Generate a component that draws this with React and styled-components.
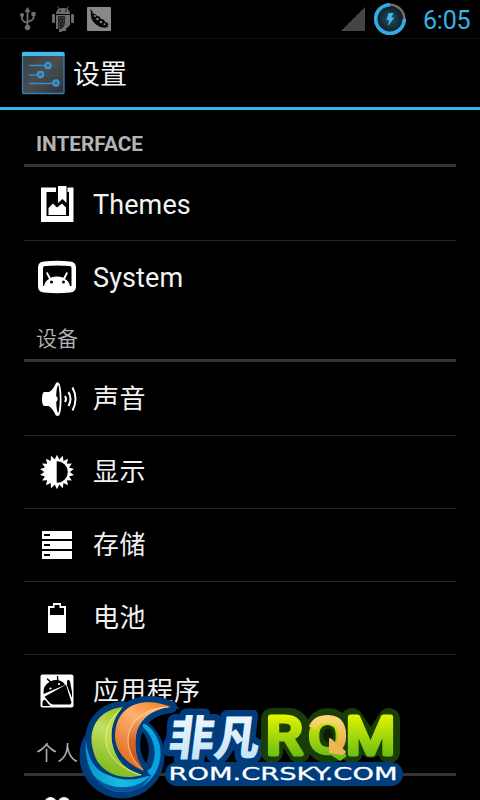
import React from "react";
import styled, { createGlobalStyle } from "styled-components";

const GlobalStyle = createGlobalStyle`
  html, body { margin: 0; background: #000; overflow: hidden; }
  * { box-sizing: border-box; }
`;

const Screen = styled.div`
  position: relative;
  width: 480px;
  height: 800px;
  overflow: hidden;
  background: #000;
  color: #f2f2f2;
  font-family: Roboto, "Noto Sans CJK SC", sans-serif;
`;

const StatusBar = styled.header`
  display: flex;
  align-items: center;
  justify-content: space-between;
  height: 39px;
  padding: 0 10px 0 19px;
  border-bottom: 1px solid #0c0e0f;
`;

const StatusGroup = styled.div`
  display: flex;
  align-items: center;
  height: 38px;
`;

const UsbGap = styled.span`
  display: flex;
  margin-right: 14px;
`;

const DroidGap = styled.span`
  display: flex;
  margin-right: 12px;
`;

const Signal = styled.svg`
  margin: 0 8px 1px 0;
`;

const Clock = styled.time`
  width: 47px;
  margin-left: 16px;
  padding-top: 3px;
  font-size: 25px;
  line-height: 36px;
  letter-spacing: -0.2px;
  white-space: nowrap;
  color: #33b5e5;
`;

const TitleBar = styled.div`
  display: flex;
  align-items: center;
  height: 71px;
  padding: 0 0 0 21px;
  border-bottom: 3px solid #33b5e5;
`;

const Title = styled.h1`
  margin: 0 0 0 8px;
  padding-top: 4px;
  font-size: 27px;
  font-weight: 400;
  line-height: 36px;
`;

const Content = styled.main`
  padding: 8px 24px 0;
`;

const SectionTitle = styled.h2`
  height: 49px;
  margin: 0 0 1px;
  padding: 4px 12px 0;
  border-bottom: 3px solid #343434;
  color: #b4b4b4;
  font-size: ${(p) => (p.$bold ? "20.8px" : "21px")};
  font-weight: ${(p) => (p.$bold ? 700 : 350)};
  line-height: 44px;
`;

const List = styled.ul`
  margin: 0;
  padding: 0;
  list-style: none;
`;

const Row = styled.li`
  display: flex;
  align-items: center;
  height: 73px;
  border-bottom: 1px solid #262626;
  &:last-child { height: 72px; border-bottom: 0; }
`;

const IconSlot = styled.span`
  display: flex;
  justify-content: center;
  width: 66px;
  margin-right: 3px;
  svg { display: block; }
`;

const Label = styled.span`
  font-size: ${(p) => (p.$latin ? "27px" : "26px")};
  line-height: 40px;
  letter-spacing: ${(p) => (p.$latin ? "0.1px" : p.$wide ? "1px" : "0.5px")};
  padding-top: ${(p) => (p.$latin ? "1px" : "0")};
`;

const Watermark = styled.svg`
  position: absolute;
  left: 70px;
  top: 690px;
`;

const Icon = ({ children }) => (
  <svg width="48" height="48" viewBox="0 0 48 48" fill="#fff">{children}</svg>
);

const UsbIcon = () => (
  <svg width="18" height="26" viewBox="0 0 18 26" fill="none" stroke="#707070" strokeWidth="1.8">
    <path d="M8.500 4v17M3 10v3q0 2 5.500 4M14.500 9v3q0 2-6 4" />
    <path d="M8.500 1l3 5h-6zM12.500 6h4v4h-4z" fill="#707070" stroke="none" />
    <circle cx="3" cy="9" r="2.100" fill="#707070" stroke="none" />
    <circle cx="8.500" cy="21.500" r="2.700" fill="#707070" stroke="none" />
  </svg>
);

const DroidIcon = () => (
  <svg width="24" height="28" viewBox="0 0 24 28" fill="#6c6c6c">
    <path d="M5 8q1-5 7-5t7 5v1H5z" />
    <path d="M8 4L6.500 1.500M16 4l1.500-2.500" stroke="#6c6c6c" strokeWidth="1" />
    <rect x="1" y="9" width="3" height="9" rx="1" />
    <rect x="20" y="9" width="3" height="9" rx="1" />
    <path d="M5 10h14v10l-4 4v2h-3l-2 1H8v-3H5z" />
    <path d="M7 11h7v6q0 5-4 7H7z" fill="#252525" />
    <path d="M8 13h5M9 16h5M8 19h4M8 22h3" stroke="#777" strokeDasharray="1 2" />
    <circle cx="9" cy="6" r=".8" fill="#000" />
    <circle cx="15" cy="6" r=".8" fill="#000" />
  </svg>
);

const PeapodIcon = () => (
  <svg width="24" height="24" viewBox="0 0 24 24">
    <rect width="24" height="24" rx="1" fill="#888" />
    <path d="M3 2.500l1 2.500Q2.500 12 9 17.500 16 23 22 19.500 17 19 13 16.500 6 12 5.500 4.500L4 2.500z" fill="#050505" />
    <path d="M5.500 6.500Q9 6 10 9q3 0 4 3 3.500 0 4 3 3 0 3.500 3l-3 1.500Q8 17 5.500 6.500z" fill="#050505" />
    <g fill="#888">
      <circle cx="8" cy="9" r="1" /><circle cx="10.500" cy="12" r="1.200" />
      <circle cx="14" cy="15" r="1.200" /><circle cx="17.500" cy="17.200" r="1" />
    </g>
  </svg>
);

const BatteryRing = () => (
  <svg width="34" height="34" viewBox="0 0 34 34" fill="none">
    <defs>
      <radialGradient id="core"><stop stopColor="#225166" /><stop offset="1" stopColor="#0c202a" /></radialGradient>
    </defs>
    <circle cx="17" cy="17" r="13" fill="url(#core)" />
    <circle cx="17" cy="17" r="14.300" stroke="#796b63" strokeWidth="2.500" />
    <path d="M17 2.700A14.300 14.300 0 1 0 31.300 17" stroke="#33ade0" strokeWidth="3.600" />
    <path d="M15.500 11h5l-2 4.500h3l-6.500 8.500 1-6h-2.500z" fill="#40b6e4" />
  </svg>
);

const SettingsIcon = () => (
  <svg width="44" height="44" viewBox="0 0 44 44">
    <defs>
      <linearGradient id="panel" x2="1" y2="1"><stop stopColor="#3b4043" /><stop offset=".5" stopColor="#4b4c4d" /><stop offset="1" stopColor="#303335" /></linearGradient>
    </defs>
    <rect x="1.500" y="1.500" width="41.500" height="41" rx="1" fill="url(#panel)" stroke="#2b83c4" strokeWidth="1.300" />
    <path d="M1 5V3q0-2 2-2h38.500q2 0 2 2v2z" fill="#45b9ea" />
    <path d="M8 14.500h17M8 24h11M8 32.500h25" stroke="#338ccf" strokeWidth="1.500" />
    <path d="M31 14.500h6M23 24h14" stroke="#285d88" strokeWidth="1.200" />
    <g fill="#555d62" stroke="#3498dd" strokeWidth="2"><circle cx="27" cy="14.500" r="2.700" /><circle cx="19.500" cy="23.500" r="2.700" /><circle cx="35" cy="32" r="2.700" /></g>
  </svg>
);

const ThemesIcon = () => (
  <Icon>
    <path d="M8 7.500h15V12h-9.500v24H36V12h-1.500V7.500h6V42H8z" />
    <path d="M25 6h8.500v17l-4-4-4.500 4z" />
    <path d="M15.500 35V28l4.500-4.500 4 4 5-4 4 4v7.500z" />
  </Icon>
);

const SystemIcon = () => (
  <Icon>
    <path fillRule="evenodd" d="M11 8.500q13-1.500 26 0 6 .5 6 6v19q0 5.500-6 6-13 1.500-26 0-6-.5-6-6v-19q0-5.500 6-6zM12 13q-2 0-2 2v18h1q1-5 5-7l-3-6 1.500-1 3.200 5.800q6.300-2.500 12.600 0L33.500 19l1.500 1-3 6q4 2 5 7h1.500V15q0-2-2-2-12-1-24.500 0z" />
    <circle cx="18.500" cy="29" r="1.500" fill="#000" />
    <circle cx="30.500" cy="29" r="1.500" fill="#000" />
  </Icon>
);

const SoundIcon = () => (
  <Icon>
    <path d="M11 17h5q4-2 7-9 5-4 5.500 16 0 21-6 16-3-7-7-9H11q-2-1-2-7t2-7z" />
    <path d="M25.500 10q-2 1-2.300 11 3 3 0 6 .3 10 2.300 11 2.500-14 0-28z" fill="#000" />
    <path d="M32 21q2 3 0 6M35.500 17q4 7 0 14M39.500 12.500q6 11.500 0 23" fill="none" stroke="#fff" strokeWidth="2" />
  </Icon>
);

const sunPoints = Array.from({ length: 36 }, (_, i) => {
  const a = (i * Math.PI) / 18 - Math.PI / 2;
  const r = i % 2 ? 12.8 : 17.2;
  return `${24 + Math.cos(a) * r},${24 + Math.sin(a) * r}`;
}).join(" ");

const DisplayIcon = () => (
  <Icon>
    <polygon points={sunPoints} />
    <path d="M24 13.500a10.500 10.500 0 0 1 0 21z" fill="#000" stroke="#000" strokeWidth=".6" />
  </Icon>
);

const StorageIcon = () => (
  <Icon>
    {[10, 20, 30].map((y) => (
      <g key={y}><rect x="9" y={y} width="30" height="8" /><rect x="11" y={y + 3} width="6" height="2" fill="#000" /></g>
    ))}
  </Icon>
);

const PowerIcon = () => (
  <Icon><path fillRule="evenodd" d="M15 12h5V9h8v3h5v27H15zM17 14v7h14v-7h-4.500v-3h-5v3z" /></Icon>
);

const AppsIcon = () => (
  <Icon>
    <rect x="7.500" y="7.500" width="33" height="33" rx="2" />
    <path d="M10.500 27Q10 18 16.500 15l-3-3 1-.8 3.500 3Q21 12.600 24 13l-.2-4h1.300l.4 4.300q5 1.200 6.500 4.700zM11.500 29.800l21.500-12 5.500 17.700-1 2H20q-3-1-4-2.500zM34 18.500v-4q.5-2.500 2-1.500 1.500 1 1.500 4l1.500 8v6zM9.500 34.500q2-3.500 4 0 2 3 4 4.500h-8z" fill="#000" />
    <circle cx="17.500" cy="21.500" r="1.100" /><circle cx="26" cy="17" r="1.100" />
  </Icon>
);

const PeopleIcon = () => (
  <Icon><circle cx="17.500" cy="14" r="6" /><circle cx="31" cy="14" r="6" /><path d="M7 35q0-14 10-14t10 14zM27 35q0-14 7-14t7 14z" /></Icon>
);

const blueArc = "M86 740C83 766 98 792 122 792C149 792 164 767 160 746C157 734 151 727 143 723L143 727C155 738 158 754 151 768C139 779 108 783 94 765C90 759 87 751 86 740Z";
const greenBlade = "M123 707C99 709 87 729 93 750C97 770 117 782 142 775C130 771 120 766 114 750C108 733 113 718 123 707Z";
const orangeBlade = "M171 707C148 697 121 702 116 727C111 748 125 763 144 771C136 760 134 748 136 735C139 719 152 709 171 707Z";

const Logo = () => (
  <Watermark width="340" height="110" viewBox="70 690 340 110">
    <defs>
      <linearGradient id="green" x1=".7" x2=".4" y2="1"><stop stopColor="#94bf1d" /><stop offset=".4" stopColor="#c3de60" /><stop offset="1" stopColor="#7ab81a" /></linearGradient>
      <linearGradient id="leaf" x2="0" y2="1"><stop stopColor="#c5db2d" /><stop offset=".4" stopColor="#c8e353" /><stop offset="1" stopColor="#7db512" /></linearGradient>
      <linearGradient id="orange" x1="1" x2=".3" y2="1"><stop stopColor="#f37a17" /><stop offset=".45" stopColor="#ffb270" /><stop offset="1" stopColor="#e06a1c" /></linearGradient>
      <linearGradient id="ember" x2="0" y2="1"><stop stopColor="#ffc98c" /><stop offset=".5" stopColor="#dc6822" /><stop offset="1" stopColor="#c84708" /></linearGradient>
      <linearGradient id="blue" x2="1" y2="0"><stop stopColor="#0793cf" /><stop offset=".45" stopColor="#17bddd" /><stop offset="1" stopColor="#049ee0" /></linearGradient>
      <linearGradient id="ice" x2="0" y2="1"><stop stopColor="#fff" /><stop offset="1" stopColor="#b9def6" /></linearGradient>
      <linearGradient id="lime" gradientUnits="userSpaceOnUse" x1="0" y1="714" x2="0" y2="759"><stop stopColor="#e5f500" /><stop offset="1" stopColor="#64b916" /></linearGradient>
      <linearGradient id="gold" x2="0" y2="1"><stop stopColor="#f9d66e" /><stop offset="1" stopColor="#eea947" /></linearGradient>
    </defs>
    <g fill="#003d7c" stroke="#003d7c" strokeWidth="12" strokeLinejoin="round">
      <circle cx="122" cy="756" r="36.500" /><path d={greenBlade} /><path d={orangeBlade} />
    </g>
    <path d={blueArc} fill="url(#blue)" stroke="#003d7c" strokeWidth="3" paintOrder="stroke" />
    <path d="M93 775C108 791 137 792 152 774Q141 794 122 792Q104 792 93 775Z" fill="#06559d" />
    <path d={greenBlade} fill="url(#green)" stroke="#003d7c" strokeWidth="5" paintOrder="stroke" />
    <path d="M122 708C99 728 98 761 142 775C130 771 120 766 114 750C108 733 113 718 122 708Z" fill="url(#leaf)" />
    <path d="M121 709C98 728 98 761 141 775" fill="none" stroke="#eef6b0" strokeWidth=".8" />
    <path d={orangeBlade} fill="url(#orange)" stroke="#003d7c" strokeWidth="5" paintOrder="stroke" />
    <path d="M170 707C130 708 114 744 144 771C136 760 134 748 136 735C139 719 152 709 170 707Z" fill="url(#ember)" />
    <path d="M168 707C130 708 114 744 143 770" fill="none" stroke="#ffdcb5" strokeWidth=".8" />
    <path d="M142.500 732C149 740 151 753 146 763C139 754 139 741 142.500 732Z" />
    <g fontFamily="'Noto Sans CJK SC', sans-serif" fontWeight="900" fontSize="47" transform="translate(167 755) skewX(-7)">
      <text textLength="91" lengthAdjust="spacingAndGlyphs" fill="url(#ice)" stroke="#003d7c" strokeWidth="13" strokeLinejoin="round" paintOrder="stroke">非凡</text>
    </g>
    <g fill="none" stroke="#193d07" strokeWidth="22" strokeLinejoin="round" strokeLinecap="round">
      <path d="M272 752V719H290Q299 721 299 729Q299 737 292 738H274M291 739L299 752" />
      <ellipse cx="328" cy="735.500" rx="14" ry="16.500" />
      <path d="M352 752V719L371 747L389 719V752" />
    </g>
    <path d="M177 774H391" stroke="#003d7c" strokeWidth="24" strokeLinecap="round" />
    <ellipse cx="328" cy="735.500" rx="5" ry="7" fill="#0c1f04" />
    <g fontFamily="Roboto, sans-serif" fontWeight="400" fill="url(#lime)" stroke="url(#lime)" strokeLinejoin="round">
      <text x="266" y="753.500" fontSize="51" strokeWidth="5" textLength="36" lengthAdjust="spacingAndGlyphs">R</text>
      <text x="308.500" y="753" fontSize="49" strokeWidth="4.500" textLength="38.500" lengthAdjust="spacingAndGlyphs">Q</text>
      <text x="346" y="753.500" fontSize="51" strokeWidth="5" textLength="49" lengthAdjust="spacingAndGlyphs">M</text>
    </g>
    <path d="M312.500 728Q316 719 328 719Q342 719.500 342 735Q342 742 338.500 747" fill="none" stroke="url(#gold)" strokeWidth="7.800" />
    <path d="M330 739L345 752L342 754L330 752Z" fill="#efb557" stroke="#efb557" strokeWidth="2" strokeLinejoin="round" />
    <text x="168.500" y="780" fontFamily="'DejaVu Sans', sans-serif" fontSize="18.500" textLength="229" lengthAdjust="spacingAndGlyphs" fill="#fff" stroke="#fff" strokeWidth=".3">ROM.CRSKY.COM</text>
  </Watermark>
);

const sections = [
  { title: "INTERFACE", latin: true, rows: [["Themes", ThemesIcon], ["System", SystemIcon]] },
  { title: "设备", rows: [["声音", SoundIcon], ["显示", DisplayIcon], ["存储", StorageIcon], ["电池", PowerIcon], ["应用程序", AppsIcon]] },
  { title: "个人", rows: [["", PeopleIcon]] },
];

export default function App() {
  return (
    <Screen>
      <GlobalStyle />
      <StatusBar>
        <StatusGroup>
          <UsbGap><UsbIcon /></UsbGap>
          <DroidGap><DroidIcon /></DroidGap>
          <PeapodIcon />
        </StatusGroup>
        <StatusGroup>
          <Signal width="24" height="24" viewBox="0 0 24 24"><path d="M0 24L24 0v24z" fill="#444" /></Signal>
          <BatteryRing />
          <Clock>6:05</Clock>
        </StatusGroup>
      </StatusBar>
      <TitleBar><SettingsIcon /><Title>设置</Title></TitleBar>
      <Content>
        {sections.map(({ title, latin, rows }) => (
          <section key={title}>
            <SectionTitle $bold={latin}>{title}</SectionTitle>
            <List>
              {rows.map(([label, Glyph]) => (
                <Row key={label}>
                  <IconSlot><Glyph /></IconSlot>
                  <Label $latin={latin} $wide={label.length > 3}>{label}</Label>
                </Row>
              ))}
            </List>
          </section>
        ))}
      </Content>
      <Logo />
    </Screen>
  );
}
